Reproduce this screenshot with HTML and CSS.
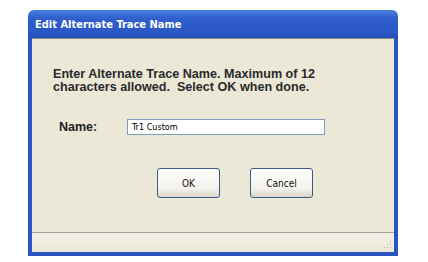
FILE: index.html
```html
<!DOCTYPE html>
<html lang="en">
<head>
    <meta charset="UTF-8">
    <title>Edit Alternate Trace Name</title>
    <link rel="stylesheet" href="styles.css">
</head>
<body>
    <div class="window">
        <div class="title-bar">Edit Alternate Trace Name</div>
        <div class="frame">
            <div class="content">
                <p class="message">Enter Alternate Trace Name. Maximum of 12<br>characters allowed.&nbsp; Select OK when done.</p>

                <div class="name-row">
                    <span class="label">Name:</span>
                    <div class="text-box">Tr1 Custom</div>
                </div>

                <div class="buttons">
                    <button class="btn">OK</button>
                    <button class="btn">Cancel</button>
                </div>
            </div>
            <div class="status-bar">
                <svg class="grip" width="8" height="8" viewBox="0 0 8 8">
                    <rect x="6" y="0" width="1" height="1" fill="#b7b39f"/>
                    <rect x="3" y="3" width="1" height="1" fill="#b7b39f"/>
                    <rect x="6" y="3" width="1" height="1" fill="#b7b39f"/>
                    <rect x="0" y="6" width="1" height="1" fill="#b7b39f"/>
                    <rect x="3" y="6" width="1" height="1" fill="#b7b39f"/>
                    <rect x="6" y="6" width="1" height="1" fill="#b7b39f"/>
                </svg>
            </div>
        </div>
    </div>
</body>
</html>
```

FILE: styles.css
```css
* {
    margin: 0;
    padding: 0;
    box-sizing: border-box;
}

body {
    background-color: white;
    font-family: "Liberation Sans", Arial, sans-serif;
}

.window {
    margin: 10px 0 0 28px;
    width: 370px;
    height: 246px;
    display: flex;
    flex-direction: column;
}

.title-bar {
    height: 28px;
    padding: 0 7px;
    border-radius: 6px 6px 0 0;
    background: linear-gradient(#4a7ee0, #2f5fcb 30%, #2a58c4 80%, #2350b6);
    color: white;
    font-family: "DejaVu Sans Condensed", sans-serif;
    font-weight: bold;
    font-size: 11px;
    line-height: 30px;
}

.frame {
    flex: 1;
    display: flex;
    flex-direction: column;
    border: 4px solid #2a55bd;
    border-top: none;
    background-color: #ebe8d8;
}

.content {
    flex: 1;
    padding: 29px 0 0 21px;
    border-top: 1px solid #8e8c80;
}

.message {
    font-size: 12.6px;
    font-weight: bold;
    line-height: 13px;
    color: #2a2a2a;
}

.name-row {
    display: flex;
    align-items: center;
    margin-top: 25px;
}

.label {
    width: 74px;
    padding-left: 6px;
    font-size: 12.5px;
    font-weight: bold;
    color: #222;
}

.text-box {
    width: 198px;
    height: 16px;
    padding-left: 4px;
    border: 1px solid #7f9db9;
    background-color: white;
    font-family: "DejaVu Sans Condensed", sans-serif;
    font-size: 9px;
    line-height: 14px;
}

.buttons {
    display: flex;
    gap: 30px;
    margin: 33px 0 0 104px;
}

.btn {
    width: 63px;
    height: 30px;
    border: 1px solid #3c5a86;
    border-radius: 3px;
    background: linear-gradient(#ffffff, #f3f2ec 70%, #d9d6c8);
    font-family: "DejaVu Sans Condensed", sans-serif;
    font-size: 10px;
    color: #111;
}

.status-bar {
    height: 20px;
    border-top: 1px solid #a6a393;
    background: linear-gradient(#f3f1e8, #ebe8d8);
    display: flex;
    justify-content: flex-end;
    align-items: flex-end;
    padding: 0 2px 3px 0;
}
```
